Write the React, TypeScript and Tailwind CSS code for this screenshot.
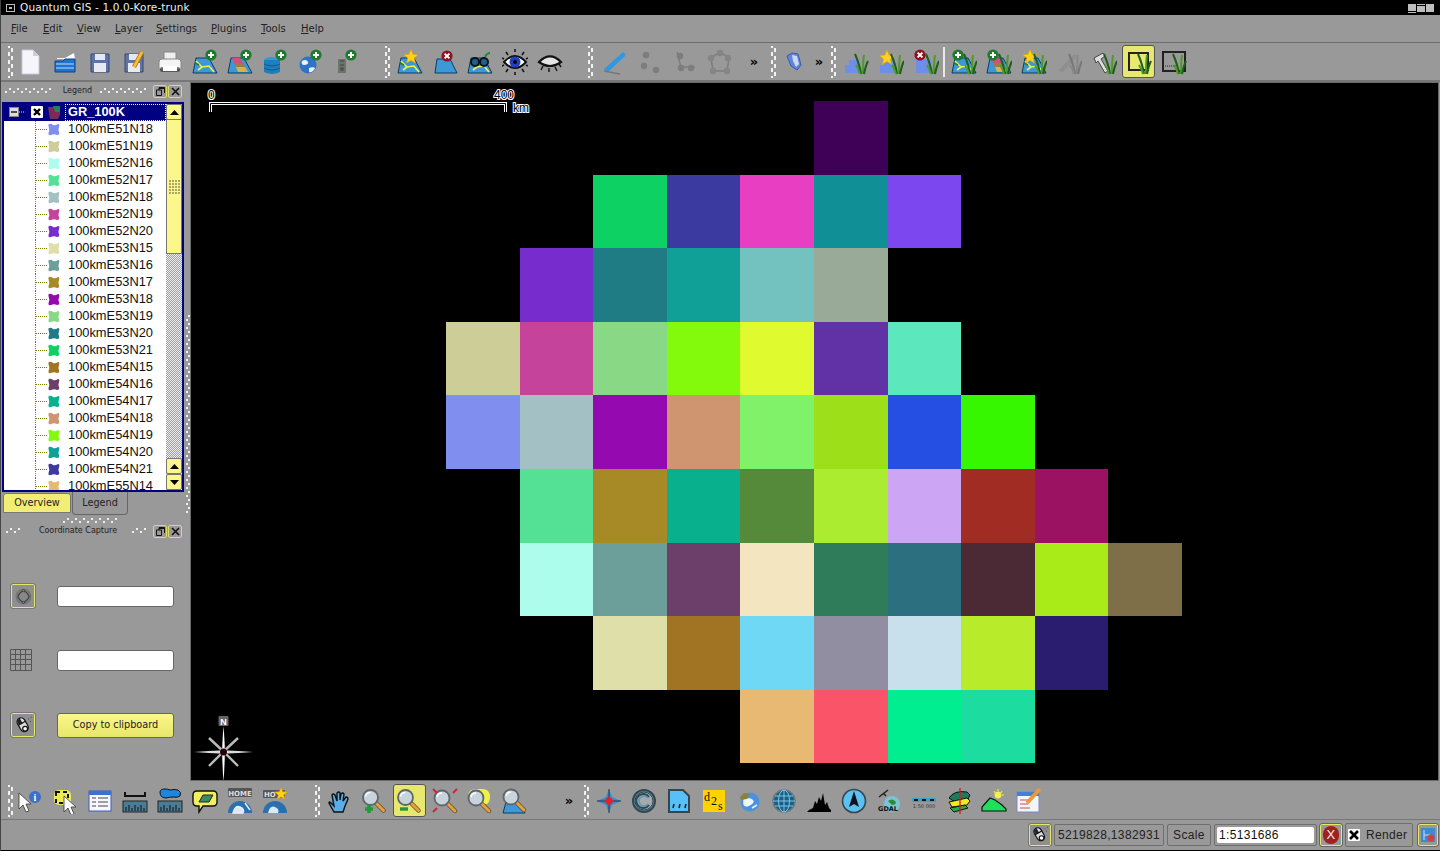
import React from "react";

const UI = "font-['DejaVu_Sans',sans-serif]";
const ARIAL = "font-['Liberation_Sans',sans-serif]";
const HALO = "absolute text-[12px] leading-none text-black [-webkit-text-stroke:2px_#fff] [paint-order:stroke_fill]";

const Svg = ({ children, s = 26 }: { children: React.ReactNode; s?: number }) => (
  <svg width={s} height={s} viewBox="0 0 26 26" className="block">{children}</svg>
);

const Plus = ({ x = 19, y = 6 }: { x?: number; y?: number }) => (
  <g>
    <circle cx={x} cy={y} r="5.6" fill="#1f7a2e" />
    <path d={`M${x - 3} ${y}h6M${x} ${y - 3}v6`} stroke="#fff" strokeWidth="2" />
  </g>
);
const Del = ({ x = 19, y = 6 }: { x?: number; y?: number }) => (
  <g>
    <circle cx={x} cy={y} r="5.6" fill="#8e1220" />
    <path d={`M${x - 2.4} ${y - 2.4}l4.8 4.8M${x + 2.4} ${y - 2.4}l-4.8 4.8`} stroke="#fff" strokeWidth="2" />
  </g>
);
const Star = ({ x = 14, y = 8, r = 7 }: { x?: number; y?: number; r?: number }) => {
  const pts = Array.from({ length: 10 }, (_, i) => {
    const a = -Math.PI / 2 + (i * Math.PI) / 5;
    const q = i % 2 ? r * 0.45 : r;
    return `${x + q * Math.cos(a)},${y + q * Math.sin(a)}`;
  }).join(" ");
  return <polygon points={pts} fill="#ffd21a" stroke="#e89a00" strokeWidth=".6" />;
};
const MapBase = () => (
  <g>
    <path d="M4 9h13l8 15H1z" fill="#3d98d8" stroke="#0d3c5c" />
    <path d="M4 12l6 6 7-1 5 6M6 21l4-3" stroke="#f6f04a" strokeWidth="1.6" fill="none" />
    <path d="M3 14l4 2" stroke="#1d7a3a" strokeWidth="1.5" />
  </g>
);
const RasterBase = () => (
  <g>
    <path d="M4 9h13l8 15H1z" fill="#3d98d8" stroke="#0d3c5c" />
    <path d="M5 9h8l3 5H7z" fill="#d24f7a" />
    <path d="M7 14h9l2 4H9z" fill="#a0784a" />
    <path d="M9 18h9l3 5H11z" fill="#d6b24a" />
  </g>
);
const Grass = ({ dx = 0, c = "#1f5e1c", d = "#4f9a2a" }: { dx?: number; c?: string; d?: string }) => (
  <g transform={`translate(${dx} 0)`} fill="none" stroke={c} strokeWidth="2">
    <path d="M17 25C16 18 14 12 11 5" />
    <path d="M19 25c0-7 0-13 1-19" stroke={d} />
    <path d="M20 25c1-5 2-9 4-13" />
    <path d="M16 25c-1-4-2-6-4-9" stroke={d} />
  </g>
);
const Blue = () => <path d="M2 24V16h4v-5h10v13z" fill="#6d8fe8" />;
const Globe = () => (
  <g>
    <circle cx="11" cy="16" r="8.5" fill="#2f72c8" />
    <path d="M5 12c3-2 5-1 6 1s-2 3-4 3-3-2-2-4zM12 19c2-1 5-1 6 0-1 3-4 5-6 4z" fill="#e8f2fb" />
  </g>
);
const Lens = ({ cx = 8.5, cy = 9.5 }: { cx?: number; cy?: number }) => (
  <g>
    <path d={`M${cx + 6} ${cy + 6}l7 7`} stroke="#5a4a2a" strokeWidth="4.4" strokeLinecap="round" />
    <path d={`M${cx + 6} ${cy + 6}l7 7`} stroke="#e8a23c" strokeWidth="3" strokeLinecap="round" />
    <circle cx={cx} cy={cy} r="7.5" fill="#c9d3dc" stroke="#5d6668" strokeWidth="1.8" />
    <path d={`M${cx - 5} ${cy - 1}a5 5 0 0 1 5-4`} stroke="#fff" strokeWidth="1.4" fill="none" />
  </g>
);
const Arrow = ({ x = 0, y = 0 }: { x?: number; y?: number }) => (
  <path transform={`translate(${x} ${y})`} d="M0 0v16l4-4 3 7 3-1-3-7h5z" fill="#fff" stroke="#333" strokeWidth=".8" />
);
const Mouse = () => (
  <g>
    <g transform="rotate(-30 12 12)">
      <rect x="7" y="3" width="10" height="18" rx="5" fill="#ddd" stroke="#111" strokeWidth="1.5" />
      <path d="M12 3v8M7 10h10" stroke="#111" strokeWidth="1.5" />
      <path d="M8 4h4v6H8z" fill="#222" />
    </g>
    <circle cx="15" cy="17" r="3" fill="#fff" stroke="#111" strokeWidth="1.5" />
    <path d="M19 5h1M22 3h1M21 8h1" stroke="#222" />
  </g>
);
const Ruler = ({ top }: { top: React.ReactNode }) => (
  <g>
    {top}
    <rect x="1" y="13" width="24" height="11" fill="#4a7d95" stroke="#222" />
    <path d="M4 23v-4M7 23v-6M10 23v-3M13 23v-6M16 23v-4M19 23v-6M22 23v-3" stroke="#111" />
  </g>
);
const Wand = ({ c = "#7d7d7d" }: { c?: string }) => <circle r="3.2" fill={c} />;

const icons: Record<string, React.ReactNode> = {
  newDoc: (<Svg><path d="M5 1h11l6 6v18H5z" fill="#f5f5fb" stroke="#c8c8d8" /><path d="M16 1v6h6" fill="#cdcde0" /></Svg>),
  open: (<Svg><path d="M5 9h8l9-5 1 6H5z" fill="#fff" /><path d="M3 12h8l2-2h10v13H3z" fill="#1f74cf" stroke="#0e4588" /><path d="M4 15h18M4 19h18" stroke="#bfe0fa" /></Svg>),
  save: (<Svg><path d="M4 5h18v18H4z" fill="#5f74a8" stroke="#38466e" /><rect x="8" y="5" width="10" height="6" fill="#e4e8f0" /><rect x="7" y="14" width="12" height="9" fill="#e8eaf2" /></Svg>),
  saveAs: (<Svg><path d="M3 5h18v18H3z" fill="#5f74a8" stroke="#38466e" /><rect x="7" y="5" width="10" height="6" fill="#e4e8f0" /><rect x="6" y="14" width="12" height="9" fill="#e8eaf2" /><path d="M20 3L12 18" stroke="#c77a10" strokeWidth="4.5" /><path d="M20 3L12 18" stroke="#f5c23c" strokeWidth="2.6" /></Svg>),
  print: (<Svg><rect x="7" y="3" width="12" height="9" fill="#eee" stroke="#888" /><path d="M2 13q0-3 3-3h16q3 0 3 3v7H2z" fill="#f4f4f4" stroke="#888" /><rect x="3" y="18" width="20" height="5" rx="2" fill="#222" opacity=".55" /><rect x="6" y="17" width="14" height="5" fill="#fff" /></Svg>),
  addVec: (<Svg><MapBase /><Plus /></Svg>),
  addRas: (<Svg><RasterBase /><Plus /></Svg>),
  addDb: (<Svg><ellipse cx="10" cy="11" rx="8" ry="3" fill="#2e9ad8" /><path d="M2 11v12q8 4 16 0V11" fill="#1f7ebc" /><path d="M2 15q8 4 16 0M2 19q8 4 16 0" stroke="#0e5a90" fill="none" /><Plus x={19} y={6} /></Svg>),
  addWms: (<Svg><Globe /><Plus /></Svg>),
  addOther: (<Svg><path d="M6 10h8v14H6z" fill="#6b746b" /><path d="M8 12h4M8 16h4" stroke="#444" /><circle cx="10" cy="20" r="2" fill="#4c554c" /><Plus /></Svg>),
  newVec: (<Svg><MapBase /><Star x={14} y={8} r={7.5} /></Svg>),
  remove: (<Svg><path d="M5 10h13l7 14H3z" fill="#3d98d8" stroke="#0d3c5c" /><Del x={15} y={7} /></Svg>),
  showAll: (<Svg><MapBase /><g fill="none" stroke="#111" strokeWidth="2"><circle cx="8" cy="13" r="4" fill="#1f5f9a" /><circle cx="17" cy="13" r="4" fill="#1f5f9a" /></g><path d="M18 8q2-4 5-4" stroke="#1d8a3a" strokeWidth="2" fill="none" /></Svg>),
  eye: (<Svg><path d="M2 13Q13 1 24 13 13 25 2 13z" fill="#fff" stroke="#111" strokeWidth="2" /><circle cx="13" cy="13" r="5.5" fill="#1f3fc0" /><circle cx="13" cy="13" r="2" fill="#000" /><path d="M6 6L4 3M13 3V0M20 6l2-3M6 20l-2 3M13 23v3M20 20l2 3M2 10L0 9M24 10l2-1M2 16l-2 1M24 16l2 1" stroke="#111" strokeWidth="1.5" /></Svg>),
  eyeOff: (<Svg><path d="M2 13Q13 2 24 13 13 21 2 13z" fill="#e4e4e4" stroke="#111" strokeWidth="2.2" /><path d="M6 17l-2 4M12 19v4M18 18l2 4M22 15l2 3" stroke="#111" strokeWidth="1.4" /></Svg>),
  edit: (<Svg><path d="M2 20L21 3q3 1 2 4L6 23z" fill="#2f98e0" /><path d="M2 22l16 3" stroke="#777" strokeWidth="1.5" /></Svg>),
  pts: (<Svg><g transform="translate(9 6)"><Wand /></g><g transform="translate(7 17)"><Wand /></g><g transform="translate(19 21)"><Wand /></g></Svg>),
  line: (<Svg><path d="M5 3l4 15h14" stroke="#7d7d7d" strokeWidth="1.5" fill="none" /><g transform="translate(8 7)"><Wand /></g><g transform="translate(9 19)"><Wand /></g><g transform="translate(19 19)"><Wand /></g></Svg>),
  poly: (<Svg><path d="M13 3l9 6-2 13H6L4 9z" stroke="#7d7d7d" strokeWidth="1.5" fill="none" /><g transform="translate(13 4)"><Wand c="#858585" /></g><g transform="translate(21 9)"><Wand c="#858585" /></g><g transform="translate(20 22)"><Wand c="#858585" /></g><g transform="translate(6 22)"><Wand c="#858585" /></g><g transform="translate(4 9)"><Wand c="#858585" /></g></Svg>),
  shp: (<Svg><path d="M4 7l5-3 6 1 3 11-4 5-6-4z" fill="#5c86d8" stroke="#3a5cb0" /><path d="M9 6l5 1 2 8-3 3-3-6z" fill="#cdd8f0" /></Svg>),
  gAdd: (<Svg><Blue /><Grass dx={1} /></Svg>),
  gNew: (<Svg><Blue /><Star x={9} y={9} r={8} /><Grass dx={2} /></Svg>),
  gDel: (<Svg><path d="M3 24V11h15v13z" fill="#6d8fe8" /><Del x={7} y={6} /><Grass dx={2} /></Svg>),
  gV: (<Svg><MapBase /><Plus x={7} y={6} /><Grass dx={2} /></Svg>),
  gR: (<Svg><RasterBase /><Plus x={7} y={6} /><Grass dx={2} /></Svg>),
  gS: (<Svg><MapBase /><Star x={9} y={8} r={7.5} /><Grass dx={2} /></Svg>),
  gE: (<Svg><path d="M2 22L18 5l3 2-14 16z" fill="#8a8a8a" opacity=".7" /><Grass dx={2} c="#777" d="#888" /></Svg>),
  gT: (<Svg><path d="M3 9l9-5 2 3-4 3 7 12-3 2-7-12-2 2z" fill="#ddd" stroke="#444" /><Grass dx={2} /></Svg>),
  gReg: (<Svg><rect x="3" y="4" width="19" height="17" fill="#e9e873" stroke="#222" strokeWidth="2" /><Grass dx={1} /></Svg>),
  gCan: (<Svg><rect x="2" y="3" width="22" height="19" fill="#999" stroke="#222" strokeWidth="2" /><path d="M4 17h14" stroke="#222" strokeDasharray="1 1" /><Grass dx={1} /></Svg>),
  identify: (<Svg><Arrow x={2} y={5} /><circle cx="18" cy="9" r="6" fill="#3d6fc8" /><text x="18" y="13" fontSize="10" fontWeight="bold" fill="#fff" textAnchor="middle" fontFamily="Liberation Serif">i</text></Svg>),
  select: (<Svg><rect x="2" y="2" width="17" height="15" rx="5" fill="#ecec4e" /><rect x="4" y="4" width="12" height="11" fill="none" stroke="#111" strokeWidth="2" strokeDasharray="4 3" /><Arrow x={12} y={8} /></Svg>),
  table: (<Svg><rect x="2" y="3" width="22" height="20" fill="#f6f6fb" stroke="#3b5fc0" /><rect x="2" y="3" width="22" height="4" fill="#3b6fd0" /><path d="M5 10h4M11 10h10M5 14h4M11 14h10M5 18h4M11 18h10" stroke="#445" strokeWidth="1.2" /></Svg>),
  measure: (<Svg><Ruler top={<path d="M3 4v4h20V4" fill="none" stroke="#111" strokeWidth="2" />} /></Svg>),
  area: (<Svg><Ruler top={<path d="M3 4q0-3 5-3 3 0 5 1 4-1 8 0 4 2 2 6-3 2-6 1-5 0-8 1-6 0-6-6z" fill="#1f86e0" stroke="#111" />} /></Svg>),
  tip: (<Svg><path d="M5 3h16q4 0 4 4v7q0 4-4 4H11l-4 6v-6H5q-4 0-4-4V7q0-4 4-4z" fill="#f2f060" stroke="#111" strokeWidth="1.4" /><path d="M7 14l4-7h10l-4 7z" fill="#3d8a6a" stroke="#222" /></Svg>),
  home: (<Svg><rect x="1" y="0" width="24" height="9" rx="1" fill="#555" /><text x="13" y="7.5" fontSize="7" fontWeight="bold" fill="#ddd" textAnchor="middle" fontFamily="DejaVu Sans">HOME</text><path d="M1 25a12 12 0 0 1 24 0z" fill="#2a6fae" /><path d="M6 25q2-8 7-6t3 6zM18 15l5 7" stroke="#e8f0f8" strokeWidth="1.5" fill="#dbe8f4" /></Svg>),
  homeNew: (<Svg><rect x="1" y="2" width="22" height="8" rx="1" fill="#555" /><text x="2" y="8.5" fontSize="7" fontWeight="bold" fill="#ddd" fontFamily="DejaVu Sans">HO</text><Star x={19} y={6} r={6.5} /><path d="M1 25a12 12 0 0 1 24 0z" fill="#2a6fae" /><path d="M6 25q2-8 7-6t3 6z" fill="#dbe8f4" /></Svg>),
  pan: (<Svg><path d="M7 24l-5-9q0-2 2 0l3 3-2-11q1-2 3 0l2 6V5q2-2 3 0v7l1-6q2-2 3 0l-1 7 3-4q2 0 2 2l-3 7-2 6z" fill="#59aee8" stroke="#111" strokeWidth="1.4" /></Svg>),
  zoomIn: (<Svg><Lens /><path d="M3 21h8M7 17v8" stroke="#1f9a3a" strokeWidth="3.4" /></Svg>),
  zoomOut: (<Svg><Lens /><path d="M3 21h8" stroke="#1f9a3a" strokeWidth="3.4" /></Svg>),
  zoomFull: (<Svg><Lens cx={10} cy={10} /><path d="M1 1l4 4M25 1l-4 4M1 24l4-4" stroke="#d9203a" strokeWidth="2" /></Svg>),
  zoomSel: (<Svg><path d="M1 8q0-7 9-7h5q8 0 8 8 0 5-3 7H7Q1 15 1 8z" fill="#f0f04a" /><Lens cx={9} cy={10} /></Svg>),
  zoomLayer: (<Svg><path d="M4 14h12l7 11H1z" fill="#3d98d8" stroke="#0d3c5c" /><Lens cx={9} cy={9} /></Svg>),
  cross: (<Svg><path d="M13 1l3 8 9 4-9 4-3 8-3-8-9-4 9-4z" fill="#2f8fd0" /><path d="M1 13h24M13 1v24" stroke="#334" /><rect x="9.5" y="9.5" width="7" height="7" fill="#e02030" transform="rotate(45 13 13)" /></Svg>),
  copy: (<Svg><circle cx="13" cy="13" r="11" fill="#4c9cc4" stroke="#33464f" strokeWidth="2" /><circle cx="13" cy="13" r="9" fill="#a8a8a8" stroke="#33464f" /><path d="M18 9a7 7 0 1 0 0 8" fill="none" stroke="#33464f" strokeWidth="2" /><path d="M17 10a5 5 0 1 0 0 6" fill="none" stroke="#4c9cc4" strokeWidth="1.5" /></Svg>),
  scaleBar: (<Svg><path d="M3 2h14l6 6v16H3z" fill="#58c0f4" stroke="#33464f" strokeWidth="2" /><path d="M7 20l1-4M13 20l1-4M19 20l1-4" stroke="#222" strokeWidth="1.6" /></Svg>),
  d2s: (<Svg><rect x="2" y="2" width="22" height="22" fill="#ffd200" /><text x="3" y="13" fontSize="12" fill="#111" fontFamily="Liberation Serif">d</text><text x="10" y="17" fontSize="12" fill="#111" fontFamily="Liberation Serif">2</text><text x="17" y="22" fontSize="12" fill="#111" fontFamily="Liberation Serif">s</text></Svg>),
  globe: (<Svg><circle cx="14" cy="14" r="9.5" fill="#4c90e0" /><path d="M8 12q5-2 8 0t-3 5q-4 2-5-1zM16 20l5-3" stroke="#eef6fc" strokeWidth="1.5" fill="#eef6fc" /><path d="M4 9l4-4 6 1-3 5-6 1z" fill="#8a8040" /></Svg>),
  grat: (<Svg><circle cx="13" cy="13" r="11" fill="#1d5f82" stroke="#6a7a82" strokeWidth="1.6" /><path d="M2 13h22M13 2v22M4 8h18M4 18h18" stroke="#7bc4e8" /><ellipse cx="13" cy="13" rx="5.5" ry="11" fill="none" stroke="#7bc4e8" /></Svg>),
  hist: (<Svg><path d="M1 24h24v-2l-2-2-2-6-2 3-2-12-2 8-2-4-2 7-2-3-2 7-4 2z" fill="#000" /></Svg>),
  north: (<Svg><circle cx="13" cy="13" r="11.5" fill="#5cc0f0" stroke="#33464f" strokeWidth="1.6" /><path d="M13 3l5 16-5-3-5 3z" fill="#0d1420" /></Svg>),
  gdal: (<Svg><circle cx="16" cy="16" r="8" fill="#7cc4d4" /><path d="M12 13q4-3 7 0t-3 4z" fill="#2d8a3a" /><path d="M3 9l9-7M7 5l3 3" stroke="#222" strokeWidth="1.5" /><text x="12" y="23" fontSize="6.5" fontWeight="bold" fill="#111" textAnchor="middle" fontFamily="DejaVu Sans">GDAL</text></Svg>),
  sbar: (<Svg><rect x="1" y="10" width="24" height="4" fill="#3fa0c8" /><path d="M3 11h4v2H3zM11 11h4v2h-4zM19 11h4v2h-4z" fill="#111" /><text x="13" y="20" fontSize="5" fill="#333" textAnchor="middle" fontFamily="DejaVu Sans">1:50 000</text></Svg>),
  layers: (<Svg><path d="M3 10q5-8 18-6l3 3-2 4-13 3z" fill="#1d7a5a" stroke="#111" /><path d="M3 14l18-4 3 3-3 4-15 2z" fill="#f2ea20" stroke="#111" /><path d="M4 20l15-3 3 3-14 4z" fill="#2aa84a" stroke="#111" /><path d="M14 0v26" stroke="#d02020" strokeWidth="1.4" /></Svg>),
  hill: (<Svg><path d="M1 23v-4l8-9 5 2 7 5 4 4v2z" fill="#1ee05a" stroke="#111" strokeWidth="1.2" /><circle cx="17" cy="7" r="3.4" fill="#f6f04a" /><path d="M17 1v2M23 7h-2M13 3l1 2M21 3l-1 2" stroke="#f6f04a" /></Svg>),
  report: (<Svg><rect x="1" y="4" width="22" height="20" fill="#f4f4fb" stroke="#7d8cc8" /><rect x="1" y="4" width="22" height="4" fill="#4a7fd0" /><path d="M4 12h10M4 16h8M4 20h10" stroke="#d04a4a" /><path d="M24 1L11 15" stroke="#e89a3c" strokeWidth="4" /></Svg>),
};

const Grip = ({ n = 8 }: { n?: number }) => (
  <svg width="7" height={n * 4 + 2} className="block shrink-0">
    {Array.from({ length: n * 2 }, (_, i) => (
      <rect key={i} x={i % 4 === 1 || i % 4 === 2 ? 3 : 0} y={i * 2 + 1} width="2" height="2" fill="#f2f2f2" />
    ))}
  </svg>
);
const HGrip = ({ w }: { w: number }) => (
  <svg width={w} height="6" className="block shrink-0">
    {Array.from({ length: Math.floor(w / 4) }, (_, i) => (
      <rect key={i} x={i * 4} y={i % 2 ? 0 : 3} width="2" height="2" fill="#eee" />
    ))}
  </svg>
);

const Slot = ({ id, active = false }: { id: string; active?: boolean }) => (
  <div className="w-[35px] h-[35px] shrink-0 flex items-center justify-center">
    {active ? (
      <div className="w-[33px] h-[33px] rounded-[3px] bg-[#e8e870] border border-[#555] flex items-center justify-center">{icons[id]}</div>
    ) : (
      icons[id]
    )}
  </div>
);
const More = ({ w }: { w: number }) => (
  <div className={`${UI} shrink-0 text-center text-[13px] font-bold text-black leading-none`} style={{ width: w }}>»</div>
);
const Sp = ({ w }: { w: number }) => <div className="shrink-0" style={{ width: w }} />;
const Row = ({ ids, active }: { ids: string[]; active?: string }) => (
  <>{ids.map((i) => <Slot key={i} id={i} active={i === active} />)}</>
);

const Menu = ({ t, w }: { t: string; w: number }) => (
  <div className="shrink-0" style={{ width: w }}><u>{t[0]}</u>{t.slice(1)}</div>
);

const names: [string, string][] = [
  ["E51N18", "#7f8eef"], ["E51N19", "#cdcd98"], ["E52N16", "#adfdec"], ["E52N17", "#54e095"], ["E52N18", "#a3c1c5"],
  ["E52N19", "#c6439b"], ["E52N20", "#772dcd"], ["E53N15", "#dedfa9"], ["E53N16", "#6d9f9a"], ["E53N17", "#a78a26"],
  ["E53N18", "#940ab0"], ["E53N19", "#88d885"], ["E53N20", "#1f7c85"], ["E53N21", "#0dd263"], ["E54N15", "#a17423"],
  ["E54N16", "#6c3f6b"], ["E54N17", "#08b08e"], ["E54N18", "#cf9570"], ["E54N19", "#83fa0b"], ["E54N20", "#10a098"],
  ["E54N21", "#3b3aa0"], ["E55N14", "#e8b973"],
];

const Blob = ({ c, s = 13 }: { c: string; s?: number }) => (
  <svg width={s} height={s} viewBox="0 0 13 13" className="block shrink-0">
    <path d="M2 1Q4 0 6 2 8 3 11 1 13 1 12 4 11 6.5 12 9 13 12 10 12 7 10.5 4 12 1 13 1.5 10 3 6.5 1.5 3 1 1.5 2 1z" fill={c} />
  </svg>
);

const DockBtns = () => (
  <div className="flex gap-[1px]">
    <div className="w-[14px] h-[13px] rounded-[2px] border border-[#dcdc60] flex items-center justify-center bg-[#999]">
      <svg width="9" height="9" viewBox="0 0 9 9"><path d="M3 .5h5.5V6M3 .5V3M.5 3h5v5.5h-5z" fill="none" stroke="#111" /><path d="M3 1h5" stroke="#111" strokeWidth="2" /></svg>
    </div>
    <div className="w-[14px] h-[13px] rounded-[2px] border border-[#dcdc60] flex items-center justify-center bg-[#999]">
      <svg width="9" height="9" viewBox="0 0 9 9"><path d="M1 1l7 7M8 1L1 8" stroke="#111" strokeWidth="1.6" /></svg>
    </div>
  </div>
);

const ScrollBtn = ({ up }: { up: boolean }) => (
  <div className="w-[16px] h-[16px] rounded-[2px] bg-[#fbf78a] border border-[#777] flex items-center justify-center shrink-0">
    <svg width="9" height="5" viewBox="0 0 9 5"><path d={up ? "M4.5 0L9 5H0z" : "M0 0h9L4.5 5z"} fill="#000" /></svg>
  </div>
);

const YBtn = ({ children, h = 24, w = 24 }: { children: React.ReactNode; h?: number; w?: number }) => (
  <div className="rounded-[2px] border border-[#e6e66a] bg-[#8f8f8f] outline outline-1 outline-[#777] flex items-center justify-center shrink-0" style={{ height: h, width: w }}>{children}</div>
);

const Legend = () => (
  <div className="relative w-[182px] h-[390px] ml-[1px] mt-[2px] border-2 border-[#000080] bg-white overflow-hidden flex shrink-0">
    <div className="w-[162px] shrink-0">
      <div className="h-[17px] bg-[#000080] flex items-center">
        <svg width="44" height="17" className="block shrink-0 ml-[4px]">
          <rect x="1.5" y="3.5" width="9" height="9" fill="#ddd" stroke="#888" />
          <path d="M3 8h6" stroke="#111" strokeWidth="1.4" />
          <path d="M11 8h6" stroke="#dcdc60" strokeDasharray="1 1" />
          <rect x="23" y="2" width="12" height="12" rx="1" fill="#fff" />
          <path d="M26 5l6 6M32 5l-6 6" stroke="#000" strokeWidth="2.4" />
        </svg>
        <svg width="15" height="15" viewBox="0 0 15 15" className="block shrink-0 -ml-[5px]">
          <path d="M1 2h7l5 2v6l-2 4H3z" fill="#7c2a5a" />
          <path d="M6 1h7v6H8z" fill="#2a7d5a" />
        </svg>
        <div className={`${ARIAL} ml-[3px] flex-1 h-[17px] leading-[14px] border border-dotted border-white text-white font-bold text-[12.8px] pl-[2px]`}>GR_100K</div>
      </div>
      {names.map(([n, c]) => (
        <div key={n} className="h-[17px] flex items-center">
          <div className="relative w-[31px] h-[17px] shrink-0 ml-[1px]">
            <div className="absolute left-[30px] top-0 h-[17px] border-l border-dotted border-[#808000]" />
          </div>
          <div className="w-[11px] border-t border-dotted border-[#808000] shrink-0" />
          <Blob c={c} />
          <div className={`${ARIAL} ml-[8px] text-[12.85px] leading-none text-[#111] whitespace-nowrap`}>100km{n}</div>
        </div>
      ))}
    </div>
    <div className="w-[16px] flex flex-col shrink-0 bg-[repeating-conic-gradient(#a0a0a0_0%_25%,#ececec_0%_50%)] bg-[length:2px_2px]">
      <ScrollBtn up />
      <div className="w-[16px] h-[135px] -mt-[1px] bg-[#fbf78a] border border-[#777] flex items-center justify-center shrink-0">
        <div className="grid grid-cols-4 gap-[1px]">
          {Array.from({ length: 20 }, (_, i) => <div key={i} className="w-[2px] h-[2px] bg-[#a8a860]" />)}
        </div>
      </div>
      <div className="flex-1" />
      <ScrollBtn up />
      <ScrollBtn up={false} />
    </div>
  </div>
);

const cells: (string | null)[][] = [
  [null, null, null, null, null, "#3f0057"],
  [null, null, "#0dd263", "#3b3aa0", "#e83fc2", "#109096", "#7d47ef"],
  [null, "#772dcd", "#1f7c85", "#10a098", "#74c2c0", "#99ab98"],
  ["#cdcd98", "#c6439b", "#88d885", "#83fa0b", "#e0fa30", "#6032a6", "#5de7bd"],
  ["#7f8eef", "#a3c1c5", "#940ab0", "#cf9570", "#7ff26a", "#9ddf18", "#254fe2", "#36f700"],
  [null, "#54e095", "#a78a26", "#08b08e", "#558a3a", "#abeb30", "#cca5f5", "#a02c24", "#9c1262"],
  [null, "#adfdec", "#6d9f9a", "#6c3f6b", "#f3e5c0", "#2f7c5b", "#2c7080", "#4c2a35", "#a8eb18", "#7e6f48"],
  [null, null, "#dedfa9", "#a17423", "#6ed8f5", "#908ea0", "#c8e0ec", "#b8ec2b", "#2a1d70"],
  [null, null, null, null, "#e8b973", "#f95468", "#00ee90", "#1ddca0"],
];

const Canvas = () => (
  <div className="relative flex-1 h-full bg-black border border-[#6a6a6a] overflow-hidden">
    <div className="pl-[255px] pt-[18px] grid grid-cols-[repeat(10,73.6px)] auto-rows-[73.6px]">
      {cells.flatMap((r, y) =>
        Array.from({ length: 10 }, (_, x) => (
          <div key={`${y}-${x}`} style={r[x] ? { background: r[x] as string } : undefined} />
        ))
      )}
    </div>
    <div className={`${ARIAL} ${HALO} left-[17px] top-[6px]`}>0</div>
    <div className={`${ARIAL} ${HALO} left-[303px] top-[6px]`}>400</div>
    <div className={`${ARIAL} ${HALO} left-[322px] top-[19px]`}>km</div>
    <svg width="300" height="12" className="absolute left-[18px] top-[18px]">
      <path d="M1.5 11V2.5H296.5V11" fill="none" stroke="#fff" strokeWidth="3" />
      <path d="M1.5 11V2.5H296.5V11" fill="none" stroke="#000" strokeWidth="1" />
    </svg>
    <svg width="60" height="68" viewBox="0 0 60 68" className="absolute left-[2px] top-[633px]">
      <defs>
        <linearGradient id="gv" x1="0" y1="0" x2="1" y2="0"><stop offset="0" stopColor="#777" /><stop offset=".5" stopColor="#fff" /><stop offset="1" stopColor="#777" /></linearGradient>
        <linearGradient id="gh" x1="0" y1="0" x2="0" y2="1"><stop offset="0" stopColor="#777" /><stop offset=".5" stopColor="#fff" /><stop offset="1" stopColor="#777" /></linearGradient>
      </defs>
      <rect x="25.5" y="0" width="10" height="10" rx="1" fill="#666" />
      <text x="30.5" y="8.5" fontSize="9" fontWeight="bold" fill="#fff" textAnchor="middle" fontFamily="Liberation Sans">N</text>
      <path d="M30.5 10l2 26-2 30-2-30z" fill="url(#gv)" />
      <path d="M1 36l29.5-2 29.5 2-29.5 2z" fill="url(#gh)" />
      <path d="M16 22l15 14M45 22L30 36M16 50l14-14M45 50L31 36" stroke="#bbb" strokeWidth="2.4" />
      <circle cx="30.5" cy="36" r="3.5" fill="#200" />
    </svg>
  </div>
);

export default function App() {
  return (
    <div className={`${UI} w-[1440px] h-[851px] overflow-hidden bg-[#999999] flex flex-col border-l border-[#444] text-[#111]`}>
      {/* title bar */}
      <div className="h-[15px] bg-black flex items-center shrink-0 -ml-[1px]">
        <div className="w-[9px] h-[8px] ml-[6px] border border-[#bbb] flex items-center justify-center"><div className="w-[3px] h-[2px] bg-[#bbb]" /></div>
        <div className="ml-[5px] text-[10.5px] text-[#eee] leading-none tracking-[0.12px]">Quantum GIS - 1.0.0-Kore-trunk</div>
        <div className="flex-1" />
        <div className="flex gap-[1px] mr-[6px] items-start">
          <div className="w-[8px] h-[8px] bg-[#bdbdbd] border-b border-black shadow-[0_1px_0_#bdbdbd]" />
          <div className="w-[8px] h-[7px] bg-[#bdbdbd] border-t border-black shadow-[0_-1px_0_#bdbdbd] mt-[1px]" />
          <div className="w-[8px] h-[8px] bg-[#bdbdbd]" />
        </div>
      </div>
      {/* menu */}
      <div className="h-[28px] shrink-0 flex items-center pl-[10px] text-[10px] text-[#222] border-b border-[#6e6e6e]">
        <Menu t="File" w={32} />
        <Menu t="Edit" w={34} />
        <Menu t="View" w={38} />
        <Menu t="Layer" w={41} />
        <Menu t="Settings" w={55} />
        <Menu t="Plugins" w={50} />
        <Menu t="Tools" w={40} />
        <Menu t="Help" w={40} />
      </div>
      {/* top toolbar */}
      <div className="h-[39px] shrink-0 flex items-center border-b-2 border-[#777]">
        <Sp w={7} /><Grip />
        <div className="-ml-[3px] flex items-center">
          <Row ids={["newDoc", "open", "save", "saveAs", "print", "addVec", "addRas", "addDb", "addWms", "addOther"]} />
          <Sp w={23} /><Grip /><Sp w={0} />
          <Row ids={["newVec", "remove", "showAll", "eye", "eyeOff"]} />
          <Sp w={21} /><Grip /><Sp w={2} />
          <Row ids={["edit", "pts", "line", "poly"]} />
          <More w={34} /><Grip /><Sp w={0} />
          <Row ids={["shp"]} />
          <More w={12} /><Sp w={6} /><Grip /><Sp w={0} />
          <Row ids={["gAdd", "gNew", "gDel"]} />
          <div className="w-[2px] h-[30px] bg-[#e8e8e8] shrink-0 mr-[1px]" />
          <Row ids={["gV", "gR", "gS", "gE", "gT", "gReg", "gCan"]} active="gReg" />
        </div>
      </div>
      {/* main */}
      <div className="flex-1 min-h-0 flex">
        <div className="w-[189px] shrink-0 flex flex-col relative">
          <div className="h-[18px] flex items-center shrink-0 pl-[4px]">
            <HGrip w={50} />
            <div className="w-[45px] text-center text-[8px] text-[#222]">Legend</div>
            <HGrip w={50} />
            <Sp w={3} />
            <DockBtns />
          </div>
          <Legend />
          <div className="flex items-start pl-[2px] h-[23px] shrink-0 text-[9.7px]">
            <div className="w-[68px] h-[20px] mt-[1px] bg-[#f2ee74] rounded-t-[3px] border border-[#777] flex items-center justify-center text-[#222]">Overview</div>
            <div className="w-[56px] h-[23px] ml-[1px] rounded-b-[4px] border border-[#666] border-t-0 flex items-center justify-center text-[#222]">Legend</div>
          </div>
          <div className="pl-[62px] mt-[3px] shrink-0"><HGrip w={58} /></div>
          <div className="h-[14px] flex items-center shrink-0 pl-[5px]">
            <HGrip w={18} />
            <div className="w-[108px] text-center text-[8px] text-[#222] whitespace-nowrap">Coordinate Capture</div>
            <HGrip w={18} />
            <Sp w={3} />
            <DockBtns />
          </div>
          <div className="pl-[10px] pr-[15px] flex flex-col mt-[46px]">
            <div className="flex items-center h-[24px]">
              <YBtn>
                <svg width="19" height="19" viewBox="0 0 19 19"><circle cx="9.5" cy="9.5" r="8" fill="#777" /><path d="M9.5 2l6 7.5-6 7.5-6-7.5z" fill="#888" stroke="#444" /><circle cx="9.5" cy="9.5" r="5" fill="none" stroke="#444" /></svg>
              </YBtn>
              <div className="ml-[22px] w-[117px] h-[21px] bg-white rounded-[3px] border border-[#666]" />
            </div>
            <div className="flex items-center h-[24px] mt-[40px]">
              <svg width="22" height="22" viewBox="0 0 22 22" className="block shrink-0 -ml-[1px]">
                <path d="M.5.5h21v21H.5zM.5 5.5h21M.5 10.5h21M.5 15.5h21M5.5.5v21M10.5.5v21M15.5.5v21" fill="none" stroke="#555" />
              </svg>
              <div className="ml-[25px] w-[117px] h-[21px] bg-white rounded-[3px] border border-[#666]" />
            </div>
            <div className="flex items-center h-[24px] mt-[41px]">
              <YBtn><Svg s={21}><Mouse /></Svg></YBtn>
              <div className="ml-[22px] w-[117px] h-[25px] rounded-[3px] border border-[#666] bg-gradient-to-b from-[#fbf78a] to-[#e9e66c] flex items-center justify-center text-[9.7px] text-[#222] whitespace-nowrap">Copy to clipboard</div>
            </div>
          </div>
          <div className="absolute right-[0px] top-[233px]">
            <svg width="4" height="200" className="block">
              {Array.from({ length: 50 }, (_, i) => <rect key={i} x={i % 2 ? 0 : 2} y={i * 4} width="2" height="2" fill="#eee" />)}
            </svg>
          </div>
        </div>
        <div className="flex-1 min-w-0 mr-[1px] flex"><Canvas /></div>
      </div>
      {/* bottom toolbar */}
      <div className="h-[39px] shrink-0 flex items-center border-b border-b-[#777] pt-[1px]">
        <Sp w={7} /><Grip />
        <div className="-ml-[3px] flex items-center">
          <Row ids={["identify", "select", "table", "measure", "area", "tip", "home", "homeNew"]} />
          <Sp w={23} /><Grip /><Sp w={0} />
          <Row ids={["pan", "zoomIn", "zoomOut", "zoomFull", "zoomSel", "zoomLayer"]} active="zoomOut" />
          <Sp w={31} /><More w={12} /><Sp w={9} /><Grip />
          <Row ids={["cross", "copy", "scaleBar", "d2s", "globe", "grat", "hist", "north", "gdal", "sbar", "layers", "hill", "report"]} />
        </div>
      </div>
      {/* status */}
      <div className={`${ARIAL} h-[31px] shrink-0 flex items-center justify-end border-b border-black text-[12px] tracking-[0.35px] text-[#222] pb-[1px]`}>
        <div className="mr-[3px]"><YBtn h={22} w={22}><Svg s={20}><Mouse /></Svg></YBtn></div>
        <div className="w-[110px] h-[22px] border border-[#6e6e6e] rounded-[2px] flex items-center justify-center mr-[3px]">5219828,1382931</div>
        <div className="w-[44px] h-[22px] border border-[#6e6e6e] rounded-[2px] flex items-center justify-center mr-[3px]">Scale</div>
        <div className="w-[103px] h-[22px] border border-[#6e6e6e] rounded-[2px] p-[2px] mr-[3px]">
          <div className="w-full h-full bg-white rounded-[2px] flex items-center pl-[2px] text-[#111]">1:5131686</div>
        </div>
        <div className="mr-[3px]">
          <div className="w-[22px] h-[22px] border border-[#e6e66a] outline outline-1 outline-[#666] rounded-[2px] flex items-center justify-center">
            <div className="w-[16px] h-[18px] rounded-full bg-[#a02020] text-[#eee] flex items-center justify-center text-[13px]">X</div>
          </div>
        </div>
        <div className="w-[68px] h-[24px] border border-[#6e6e6e] rounded-[2px] flex items-center pl-[2px] mr-[5px]">
          <div className="w-[12px] h-[12px] bg-white rounded-[1px] flex items-center justify-center mr-[6px]">
            <svg width="10" height="10" viewBox="0 0 10 10"><path d="M1 1l8 8M9 1L1 9" stroke="#000" strokeWidth="2.6" /></svg>
          </div>
          Render
        </div>
        <div className="w-[20px] h-[22px] border border-[#e6e66a] outline outline-1 outline-[#666] rounded-[2px] flex items-center justify-center mr-[2px]">
          <svg width="16" height="16" viewBox="0 0 16 16"><rect x="1" y="1" width="14" height="14" fill="#3d8ad0" /><path d="M4 3v10M4 8h6" stroke="#cde" /><circle cx="11" cy="11" r="3.5" fill="#d04040" /></svg>
        </div>
      </div>
    </div>
  );
}
